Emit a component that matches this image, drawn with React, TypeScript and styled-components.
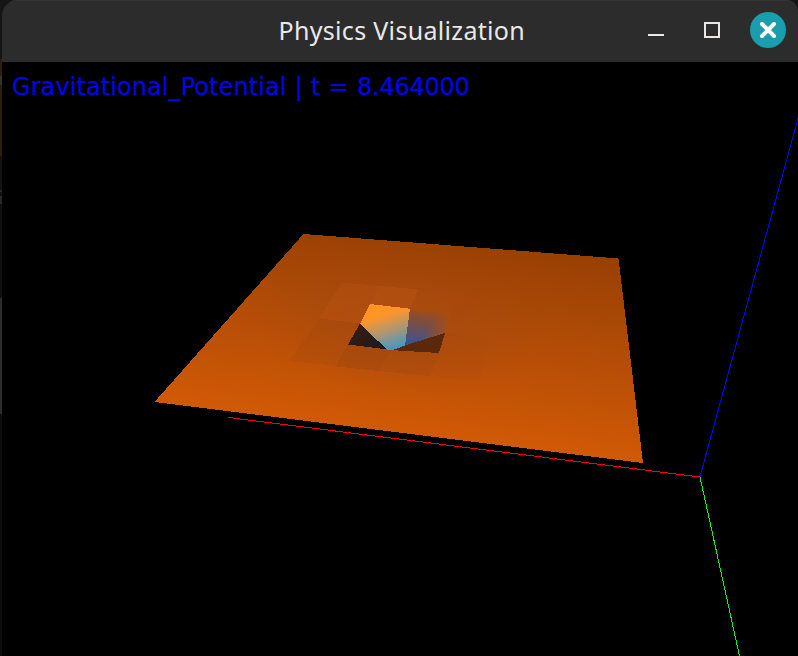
import React from "react";
import styled, { createGlobalStyle } from "styled-components";

const GlobalStyle = createGlobalStyle`
  * { box-sizing: border-box; }
  body { margin: 0; background: #000; overflow: hidden; }
`;

const Desktop = styled.div`
  display: flex;
  width: 798px;
  height: 656px;
  padding-left: 2px;
  background: linear-gradient(
    #151515 0 59px, #2b1d10 59px 76px, #333 76px 85px, #2b1d10 85px 156px,
    #131313 156px 190px, #292929 190px 192px, #111 192px 196px, #292929 196px 204px,
    #101010 204px 298px, #2d2d2d 298px 414px, #0c0c0c 414px
  );
`;

const Window = styled.main`
  display: flex;
  flex-direction: column;
  width: 796px;
  height: 656px;
  border-radius: 15px 11px 0 0;
  overflow: hidden;
  background: #000;
`;

const TitleBar = styled.header`
  display: grid;
  grid-template-columns: 1fr auto 1fr;
  align-items: center;
  height: 62px;
  padding-right: 12px;
  background: #2c2c2c;
  box-shadow: inset 0 1px #333;
`;

const Title = styled.h1`
  grid-column: 2;
  margin: 0;
  padding: 0 0 2px 14px;
  width: 259px;
  color: #e9e8e6;
  font: 400 25px/36px "Noto Sans", sans-serif;
  letter-spacing: 0.32px;
  white-space: nowrap;
`;

const Controls = styled.div`
  display: flex;
  justify-content: flex-end;
  align-items: center;
  gap: 20px;
  padding-bottom: 2px;
`;

const ControlButton = styled.button<{ $accent?: boolean }>`
  display: grid;
  place-items: center;
  width: 36px;
  height: 36px;
  padding: 0;
  border: 0;
  border-radius: 50%;
  background: ${(p) => (p.$accent ? "#1a9dac" : "transparent")};
`;

const Viewport = styled.section`
  display: grid;
  width: 796px;
  height: 594px;
  > * { grid-area: 1 / 1; }
`;

const Readout = styled.p`
  margin: 11px 0 0 10px;
  color: #0000ff;
  font: 24px/28px "DejaVu Sans", sans-serif;
  letter-spacing: 0.08px;
  word-spacing: 0.45px;
  white-space: nowrap;
  z-index: 1;
`;

const TimeValue = styled.span`
  letter-spacing: -0.25px;
`;

const Scene = styled.svg`
  display: block;
  width: 796px;
  height: 594px;
`;

function PotentialScene() {
  return (
    <Scene viewBox="2 62 796 594" shapeRendering="crispEdges">
      <defs>
        <linearGradient id="plane" gradientUnits="userSpaceOnUse" x1="462" y1="240" x2="436" y2="444">
          <stop offset="0" stopColor="#984003" />
          <stop offset="0.45" stopColor="#b24c07" />
          <stop offset="1" stopColor="#d35a05" />
        </linearGradient>
        <radialGradient id="haze" gradientUnits="userSpaceOnUse" cx="0" cy="0" r="1" gradientTransform="translate(402 322) rotate(5) scale(145 75)">
          <stop offset="0" stopColor="#a04a18" stopOpacity="0.55" />
          <stop offset="1" stopColor="#a04a18" stopOpacity="0" />
        </radialGradient>
        <linearGradient id="slope" gradientUnits="userSpaceOnUse" x1="381" y1="313" x2="393" y2="350">
          <stop offset="0" stopColor="#ff9522" />
          <stop offset="0.12" stopColor="#f69530" />
          <stop offset="0.5" stopColor="#af9770" />
          <stop offset="1" stopColor="#4296c6" />
        </linearGradient>
        <linearGradient id="well" gradientUnits="userSpaceOnUse" x1="430" y1="310" x2="426" y2="344">
          <stop offset="0" stopColor="#3e5292" stopOpacity="0" />
          <stop offset="0.35" stopColor="#54506c" stopOpacity="0.5" />
          <stop offset="1" stopColor="#3e5292" />
        </linearGradient>
        <linearGradient id="wellEdge" gradientUnits="userSpaceOnUse" x1="428" y1="325" x2="450" y2="334">
          <stop offset="0" stopColor="#ad4c10" stopOpacity="0" />
          <stop offset="1" stopColor="#ad4c10" />
        </linearGradient>
        <linearGradient id="shade" gradientUnits="userSpaceOnUse" x1="357" y1="324" x2="379" y2="351">
          <stop offset="0" stopColor="#3b1c0b" />
          <stop offset="1" stopColor="#191a25" />
        </linearGradient>
      </defs>

      {/* Potential surface */}
      <polygon points="303.5,234 618.5,258.5 643,463 154.5,402" fill="url(#plane)" />
      <polygon points="303.5,234 618.5,258.5 643,463 154.5,402" fill="url(#haze)" />

      {/* Faceted cells around the well */}
      <polygon points="341.7,282.5 379.3,286 360,323.5 319,318.3" fill="#c85b17" opacity="0.2" />
      <polygon points="379.3,286 418,289.3 410,309 370,304" fill="#c85b17" opacity="0.3" />
      <polygon points="418,289.3 458,293 445,334 410,309" fill="#b95514" opacity="0.12" />
      <polygon points="319,318.3 360,323.5 348,344 337,366 289,361" fill="#95420e" opacity="0.15" />
      <polygon points="348,344 391,350 379,371 336,366.5" fill="#8e3f12" opacity="0.3" />
      <polygon points="391,350 439,353 430,376 379,371" fill="#8e3f12" opacity="0.2" />
      <polygon points="445,333 490,337 480,381 430,376" fill="#95420e" opacity="0.06" />

      {/* Well */}
      <polygon points="410,309 451,312 445,333 391,350 404,350" fill="url(#well)" />
      <polygon points="410,309 451,312 445,333 391,350 404,350" fill="url(#wellEdge)" />
      <polygon points="360,323.5 348,344.5 388,349.5" fill="url(#shade)" />
      <polygon points="445,333 439,353 390,350" fill="#5a290c" />
      <polygon points="370,304 410,308.7 405,345.5 393,350 387,349.5 360,324" fill="url(#slope)" />

      {/* Coordinate axes */}
      <path d="M228.5 417.5 700 477" stroke="#f00" />
      <path d="M700 476.5 798 118.5" stroke="#00f" />
      <path d="M700 477 739.5 656" stroke="#0f0" />
    </Scene>
  );
}

export default function App() {
  return (
    <>
      <GlobalStyle />
      <Desktop>
        <Window>
          <TitleBar>
            <Title>Physics Visualization</Title>
            <Controls>
              <ControlButton aria-label="Minimize">
                <svg width="16" height="16"><path d="M0 13H16" stroke="#e9e8e6" strokeWidth="2" /></svg>
              </ControlButton>
              <ControlButton aria-label="Maximize">
                <svg width="16" height="16"><rect x="1" y="1" width="14" height="14" fill="none" stroke="#e9e8e6" strokeWidth="2" /></svg>
              </ControlButton>
              <ControlButton $accent aria-label="Close">
                <svg width="16" height="16"><path d="M2 2 14 14M14 2 2 14" stroke="#fff" strokeWidth="4" strokeLinecap="round" /></svg>
              </ControlButton>
            </Controls>
          </TitleBar>
          <Viewport>
            <Readout>Gravitational_Potential | t = <TimeValue>8.464000</TimeValue></Readout>
            <PotentialScene />
          </Viewport>
        </Window>
      </Desktop>
    </>
  );
}
